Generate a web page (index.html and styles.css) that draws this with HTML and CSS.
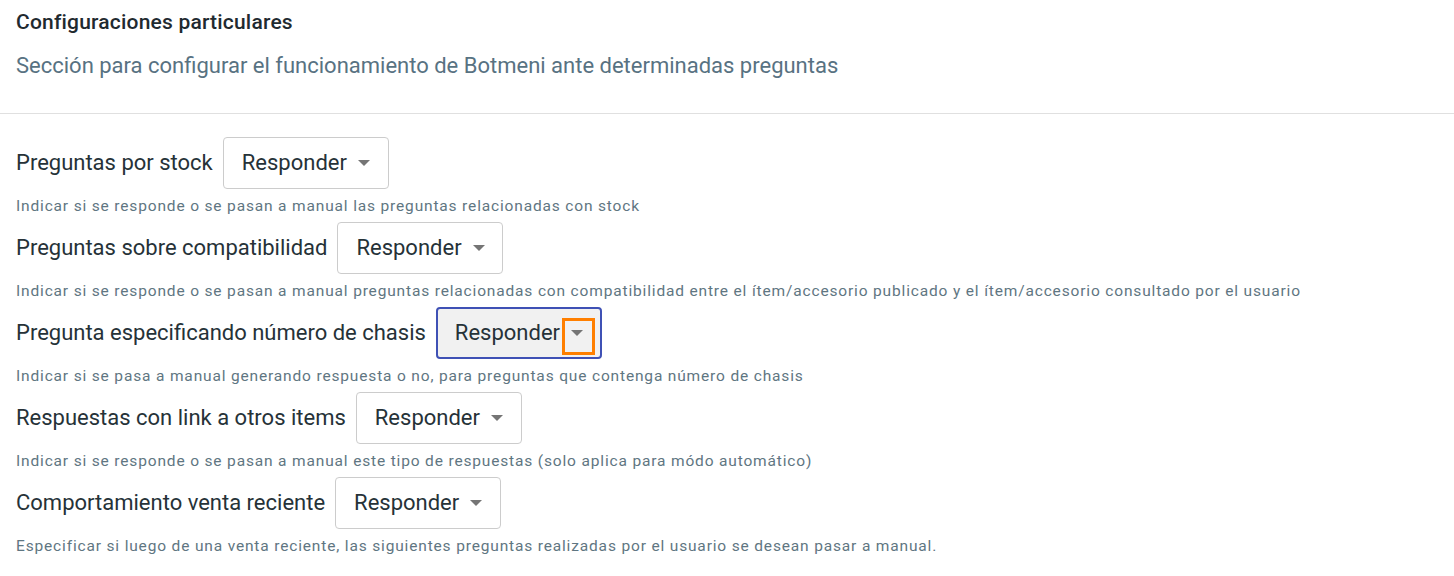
FILE: index.html
```html
<!DOCTYPE html>
<html lang="es">
<head>
<meta charset="utf-8">
<title>Configuraciones particulares</title>
<link rel="stylesheet" href="styles.css">
</head>
<body>
<header class="head">
  <h1 class="title">Configuraciones particulares</h1>
  <p class="subtitle">Sección para configurar el funcionamiento de Botmeni ante determinadas preguntas</p>
</header>
<hr class="divider">
<main class="list">
  <div class="item">
    <div class="row">
      <span class="label">Preguntas por stock</span>
      <div class="select"><span class="value">Responder</span><span class="caret"></span></div>
    </div>
    <p class="help">Indicar si se responde o se pasan a manual las preguntas relacionadas con stock</p>
  </div>
  <div class="item">
    <div class="row">
      <span class="label">Preguntas sobre compatibilidad</span>
      <div class="select"><span class="value">Responder</span><span class="caret"></span></div>
    </div>
    <p class="help">Indicar si se responde o se pasan a manual preguntas relacionadas con compatibilidad entre el ítem/accesorio publicado y el ítem/accesorio consultado por el usuario</p>
  </div>
  <div class="item">
    <div class="row">
      <span class="label">Pregunta especificando número de chasis</span>
      <div class="select focused"><span class="value">Responder</span><span class="caret"></span><span class="highlight"></span></div>
    </div>
    <p class="help">Indicar si se pasa a manual generando respuesta o no, para preguntas que contenga número de chasis</p>
  </div>
  <div class="item">
    <div class="row">
      <span class="label">Respuestas con link a otros items</span>
      <div class="select"><span class="value">Responder</span><span class="caret"></span></div>
    </div>
    <p class="help">Indicar si se responde o se pasan a manual este tipo de respuestas (solo aplica para módo automático)</p>
  </div>
  <div class="item">
    <div class="row">
      <span class="label">Comportamiento venta reciente</span>
      <div class="select"><span class="value">Responder</span><span class="caret"></span></div>
    </div>
    <p class="help">Especificar si luego de una venta reciente, las siguientes preguntas realizadas por el usuario se desean pasar a manual.</p>
  </div>
</main>
</body>
</html>
```
FILE: styles.css
```css
* { box-sizing: border-box; }
html, body { margin: 0; padding: 0; background: #ffffff; }
body {
  font-family: Roboto, "Noto Sans", Arial, sans-serif;
  color: #263238;
}
.head { padding: 10px 16px 0 16px; }
.title {
  margin: 0;
  font-size: 21px;
  line-height: 24px;
  font-weight: 500;
  letter-spacing: 0.2px;
  color: #1f2a30;
}
.subtitle {
  margin: 18px 0 0 0;
  font-size: 22px;
  line-height: 28px;
  font-weight: 400;
  color: #587282;
}
.divider {
  margin: 33px 0 0 0;
  border: 0;
  border-top: 1px solid #e0e0e0;
  height: 0;
}
.list { padding: 23px 16px 0 16px; }
.item { margin-bottom: 6px; }
.row {
  display: flex;
  align-items: center;
  gap: 10px;
}
.label {
  font-size: 22px;
  line-height: 28px;
  color: #263238;
}
.select {
  position: relative;
  display: flex;
  align-items: center;
  width: 166px;
  height: 52px;
  padding: 0 0 0 18px;
  border: 1px solid #cccccc;
  border-radius: 4px;
  background: #ffffff;
}
.value {
  font-size: 22px;
  line-height: 28px;
  color: #263238;
}
.caret {
  margin-left: 11px;
  width: 0;
  height: 0;
  border-left: 6px solid transparent;
  border-right: 6px solid transparent;
  border-top: 6px solid #757575;
}
.select.focused {
  border: 2px solid #3f51b5;
  background: #f1f1f1;
  padding-left: 17px;
}
.highlight {
  position: absolute;
  left: 124px;
  top: 9px;
  width: 33px;
  height: 37px;
  border: 3px solid #ff7f00;
}
.help {
  margin: 7px 0 0 0;
  font-size: 15.5px;
  line-height: 20px;
  letter-spacing: 0.84px;
  color: #5f7682;
}
```
